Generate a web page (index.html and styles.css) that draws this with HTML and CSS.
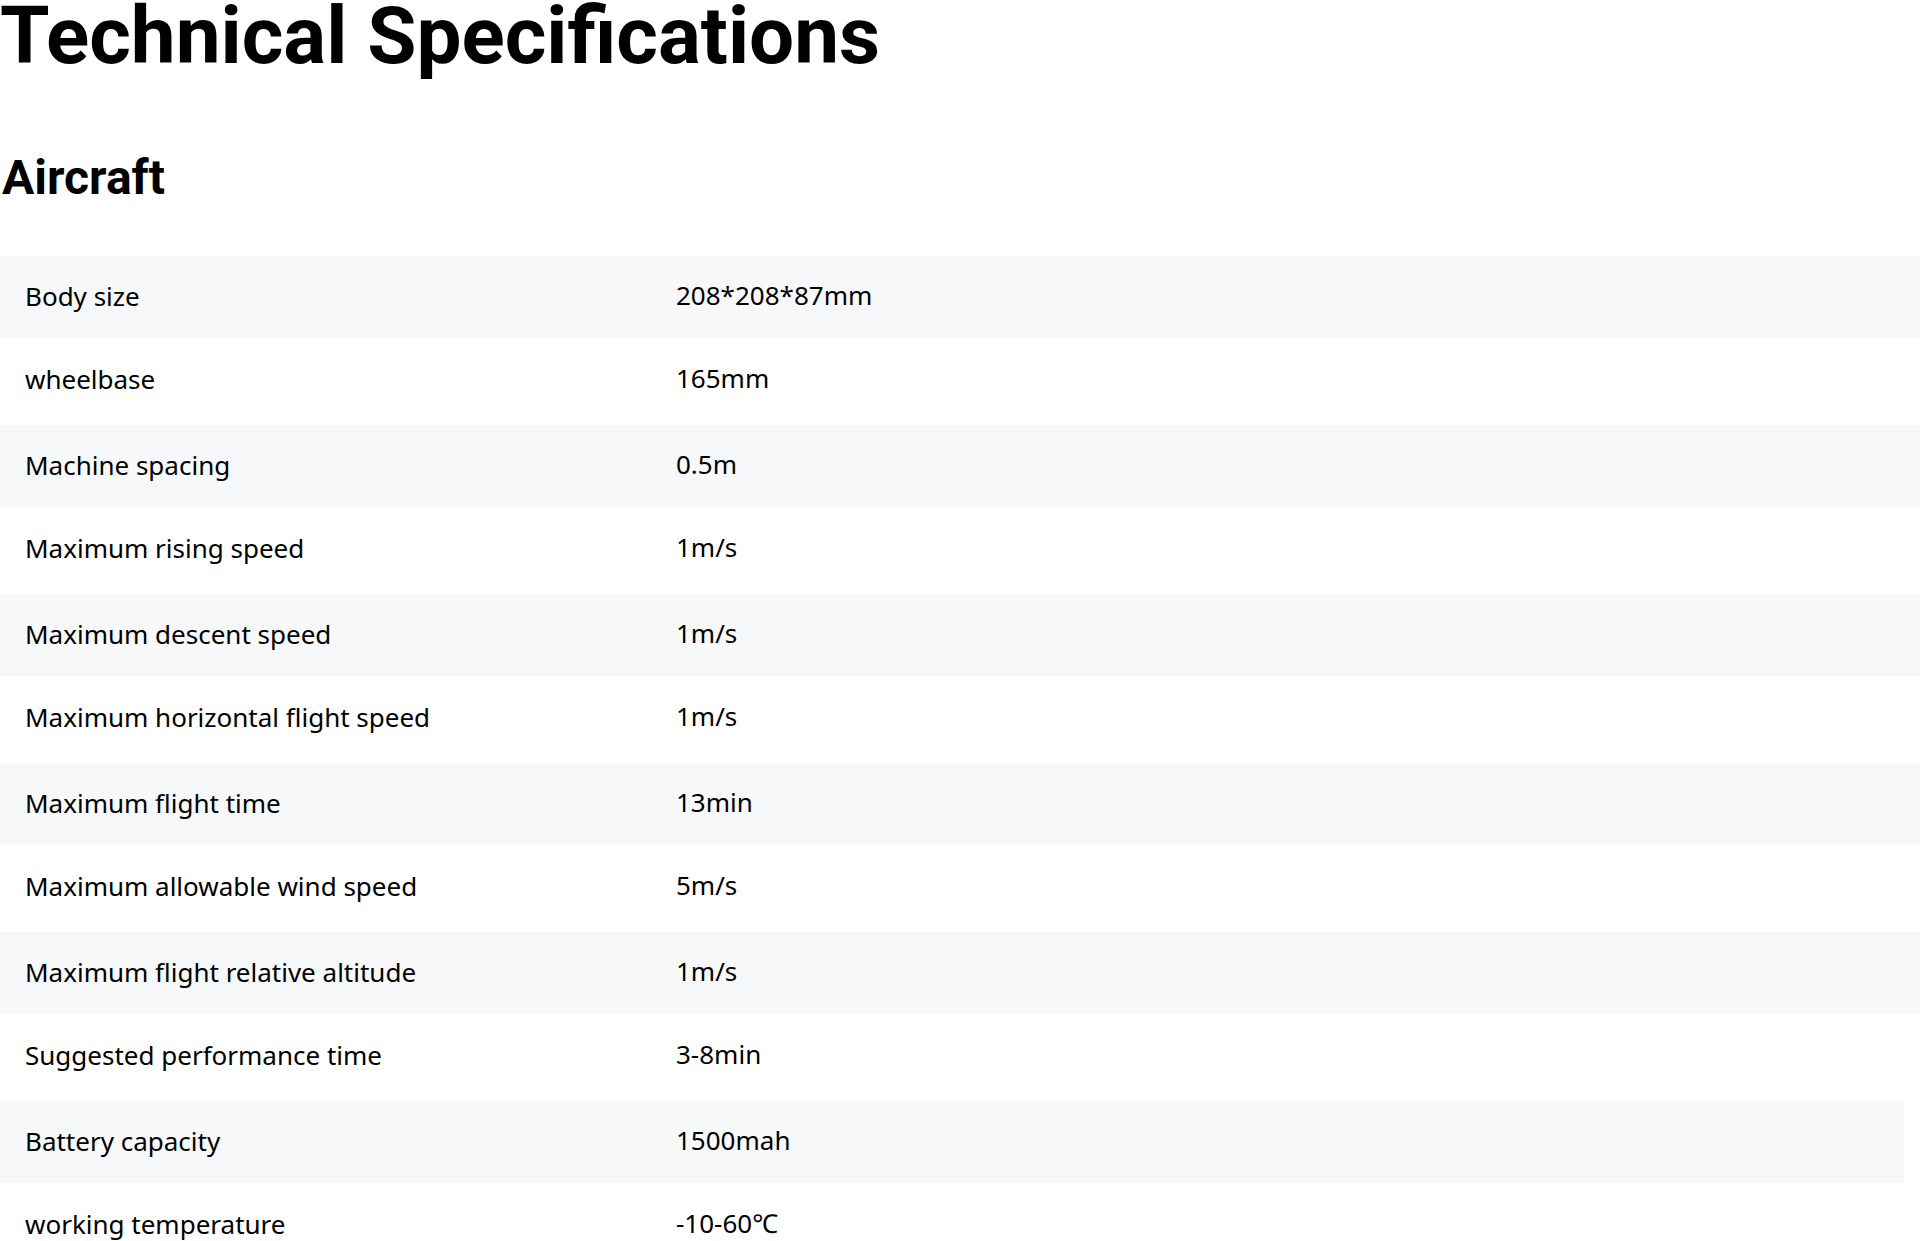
FILE: index.html
```html
<!DOCTYPE html>
<html lang="en">
<head>
<meta charset="utf-8">
<title>Technical Specifications</title>
<link rel="stylesheet" href="styles.css">
</head>
<body>
<main class="specs">
  <h1 class="specs-title">Technical Specifications</h1>
  <h2 class="specs-section">Aircraft</h2>
  <div class="spec-table">
    <div class="spec-row"><div class="spec-label">Body size</div><div class="spec-value">208*208*87mm</div></div>
    <div class="spec-row"><div class="spec-label">wheelbase</div><div class="spec-value">165mm</div></div>
    <div class="spec-row"><div class="spec-label">Machine spacing</div><div class="spec-value">0.5m</div></div>
    <div class="spec-row"><div class="spec-label">Maximum rising speed</div><div class="spec-value">1m/s</div></div>
    <div class="spec-row"><div class="spec-label">Maximum descent speed</div><div class="spec-value">1m/s</div></div>
    <div class="spec-row"><div class="spec-label">Maximum horizontal flight speed</div><div class="spec-value">1m/s</div></div>
    <div class="spec-row"><div class="spec-label">Maximum flight time</div><div class="spec-value">13min</div></div>
    <div class="spec-row"><div class="spec-label">Maximum allowable wind speed</div><div class="spec-value">5m/s</div></div>
    <div class="spec-row"><div class="spec-label">Maximum flight relative altitude</div><div class="spec-value">1m/s</div></div>
    <div class="spec-row"><div class="spec-label">Suggested performance time</div><div class="spec-value">3-8min</div></div>
    <div class="spec-row spec-row--inset"><div class="spec-label">Battery capacity</div><div class="spec-value">1500mah</div></div>
    <div class="spec-row"><div class="spec-label">working temperature</div><div class="spec-value">-10-60℃</div></div>
  </div>
</main>
</body>
</html>
```
FILE: styles.css
```css
html, body {
  margin: 0;
  padding: 0;
  background: #ffffff;
}

body {
  font-family: "Noto Sans", "Open Sans", sans-serif;
  color: #000000;
}

.specs {
  display: flex;
  flex-direction: column;
}

.specs-title {
  margin: 0;
  font-family: Roboto, "Noto Sans", sans-serif;
  font-weight: 700;
  font-size: 80px;
  line-height: 72px;
  letter-spacing: 0;
  color: #000000;
}

.specs-section {
  margin: 78px 0 50px;
  padding-left: 2px;
  font-family: Roboto, "Noto Sans", sans-serif;
  font-weight: 700;
  font-size: 48px;
  line-height: 56px;
  color: #000000;
}

.spec-table {
  display: flex;
  flex-direction: column;
}

.spec-row {
  display: grid;
  grid-template-columns: 651px 1fr;
  align-items: center;
  box-sizing: border-box;
  height: 87px;
  padding: 0 0 5px 25px;
  font-size: 26px;
  line-height: 35px;
  white-space: nowrap;
}

.spec-row:nth-child(odd) {
  height: 82px;
  padding-bottom: 2px;
  background: #f7f8fa;
}

.spec-row--inset {
  margin-right: 16px;
}

.spec-label {
  color: #000000;
}

.spec-value {
  color: #000000;
  padding-bottom: 1px;
}
```
